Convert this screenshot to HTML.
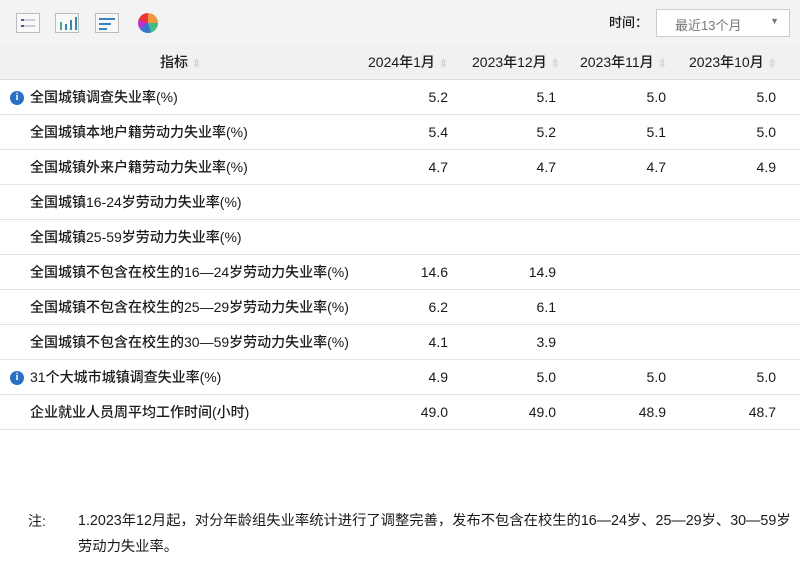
<!DOCTYPE html>
<html><head><meta charset="utf-8"><style>
*{margin:0;padding:0;box-sizing:border-box}
body{width:800px;height:563px;background:#fff;font-family:"Liberation Sans","Noto Sans CJK SC",sans-serif;color:#1a1a1a;position:relative;overflow:hidden}
.top{position:absolute;left:0;top:0;width:800px;height:45px;background:#f3f3f3}
.ic{position:absolute;top:13px;width:24px;height:20px;border:1px solid #bbb;background:#f8f8f8}
.hdr{position:absolute;left:0;top:45px;width:800px;height:35px;background:#f1f1f1;border-bottom:1px solid #ddd}
.c{position:absolute;font-size:14px;line-height:35px;white-space:nowrap;font-weight:500}
.row{position:absolute;left:0;width:800px;height:35px;border-bottom:1px solid #e3e3e3}
.lab{position:absolute;left:30px;font-size:14px;line-height:35px;white-space:nowrap;font-weight:500}
.v{position:absolute;width:60px;text-align:right;font-size:14px;line-height:35px}
.ar{color:#bbb;font-size:11px}
.info{position:absolute;left:10px;top:11px;width:14px;height:14px;border-radius:50%;background:#2a6fc6;color:#fff;font-size:10px;line-height:14px;text-align:center;font-weight:bold;font-family:"Liberation Serif",serif}
</style></head><body>
<div class="top">
<div class="ic" style="left:16px"><div style="position:absolute;left:4px;top:5px;width:14px;height:2px;border-left:3px solid #557;background:#ccd"></div><div style="position:absolute;left:4px;top:11px;width:14px;height:2px;border-left:3px solid #557;background:#ccd"></div></div>
<div class="ic" style="left:55px"><div style="position:absolute;left:4px;bottom:2px;width:2px;height:8px;background:#4a8"></div><div style="position:absolute;left:9px;bottom:2px;width:2px;height:6px;background:#38a"></div><div style="position:absolute;left:14px;bottom:2px;width:2px;height:10px;background:#38a"></div><div style="position:absolute;left:19px;bottom:2px;width:2px;height:13px;background:#38a"></div></div>
<div class="ic" style="left:95px"><div style="position:absolute;left:3px;top:4px;width:16px;height:2px;background:#3a7fc0"></div><div style="position:absolute;left:3px;top:9px;width:12px;height:2px;background:#3a7fc0"></div><div style="position:absolute;left:3px;top:14px;width:8px;height:2px;background:#3a7fc0"></div></div>
<div style="position:absolute;left:138px;top:13px;width:20px;height:20px;border-radius:50%;background:conic-gradient(#e94 0 25%,#4b8 25% 45%,#37c 45% 65%,#b3c 65% 80%,#e33 80% 100%)"></div>
<div class="c" style="left:609px;top:5px;font-size:13px">时间：</div>
<div style="position:absolute;left:656px;top:9px;width:134px;height:28px;border:1px solid #ccc;background:#fff"><span style="position:absolute;left:18px;top:5px;font-size:13px;color:#777">最近13个月</span><span style="position:absolute;right:10px;top:6px;font-size:9px;color:#777">▼</span></div>
</div>
<div class="hdr">
<div class="c" style="left:160px">指标 <span class="ar">⇳</span></div>
<div class="c" style="left:368px">2024年1月 <span class="ar">⇳</span></div>
<div class="c" style="left:472px">2023年12月 <span class="ar">⇳</span></div>
<div class="c" style="left:580px">2023年11月 <span class="ar">⇳</span></div>
<div class="c" style="left:689px">2023年10月 <span class="ar">⇳</span></div>
</div>
<div class="row" style="top:80px"><div class="info">i</div><div class="lab">全国城镇调查失业率(%)</div><div class="v" style="left:388px">5.2</div><div class="v" style="left:496px">5.1</div><div class="v" style="left:606px">5.0</div><div class="v" style="left:716px">5.0</div></div>
<div class="row" style="top:115px"><div class="lab">全国城镇本地户籍劳动力失业率(%)</div><div class="v" style="left:388px">5.4</div><div class="v" style="left:496px">5.2</div><div class="v" style="left:606px">5.1</div><div class="v" style="left:716px">5.0</div></div>
<div class="row" style="top:150px"><div class="lab">全国城镇外来户籍劳动力失业率(%)</div><div class="v" style="left:388px">4.7</div><div class="v" style="left:496px">4.7</div><div class="v" style="left:606px">4.7</div><div class="v" style="left:716px">4.9</div></div>
<div class="row" style="top:185px"><div class="lab">全国城镇16-24岁劳动力失业率(%)</div></div>
<div class="row" style="top:220px"><div class="lab">全国城镇25-59岁劳动力失业率(%)</div></div>
<div class="row" style="top:255px"><div class="lab">全国城镇不包含在校生的16—24岁劳动力失业率(%)</div><div class="v" style="left:388px">14.6</div><div class="v" style="left:496px">14.9</div></div>
<div class="row" style="top:290px"><div class="lab">全国城镇不包含在校生的25—29岁劳动力失业率(%)</div><div class="v" style="left:388px">6.2</div><div class="v" style="left:496px">6.1</div></div>
<div class="row" style="top:325px"><div class="lab">全国城镇不包含在校生的30—59岁劳动力失业率(%)</div><div class="v" style="left:388px">4.1</div><div class="v" style="left:496px">3.9</div></div>
<div class="row" style="top:360px"><div class="info">i</div><div class="lab">31个大城市城镇调查失业率(%)</div><div class="v" style="left:388px">4.9</div><div class="v" style="left:496px">5.0</div><div class="v" style="left:606px">5.0</div><div class="v" style="left:716px">5.0</div></div>
<div class="row" style="top:395px"><div class="lab">企业就业人员周平均工作时间(小时)</div><div class="v" style="left:388px">49.0</div><div class="v" style="left:496px">49.0</div><div class="v" style="left:606px">48.9</div><div class="v" style="left:716px">48.7</div></div>
<div style="position:absolute;left:28px;top:508px;font-size:14px;line-height:26px">注:</div>
<div style="position:absolute;left:78px;top:508px;width:722px;font-size:14.3px;line-height:26px;white-space:nowrap">1.2023年12月起，对分年龄组失业率统计进行了调整完善，发布不包含在校生的16—24岁、25—29岁、30—59岁<br>劳动力失业率。</div>
</body></html>
